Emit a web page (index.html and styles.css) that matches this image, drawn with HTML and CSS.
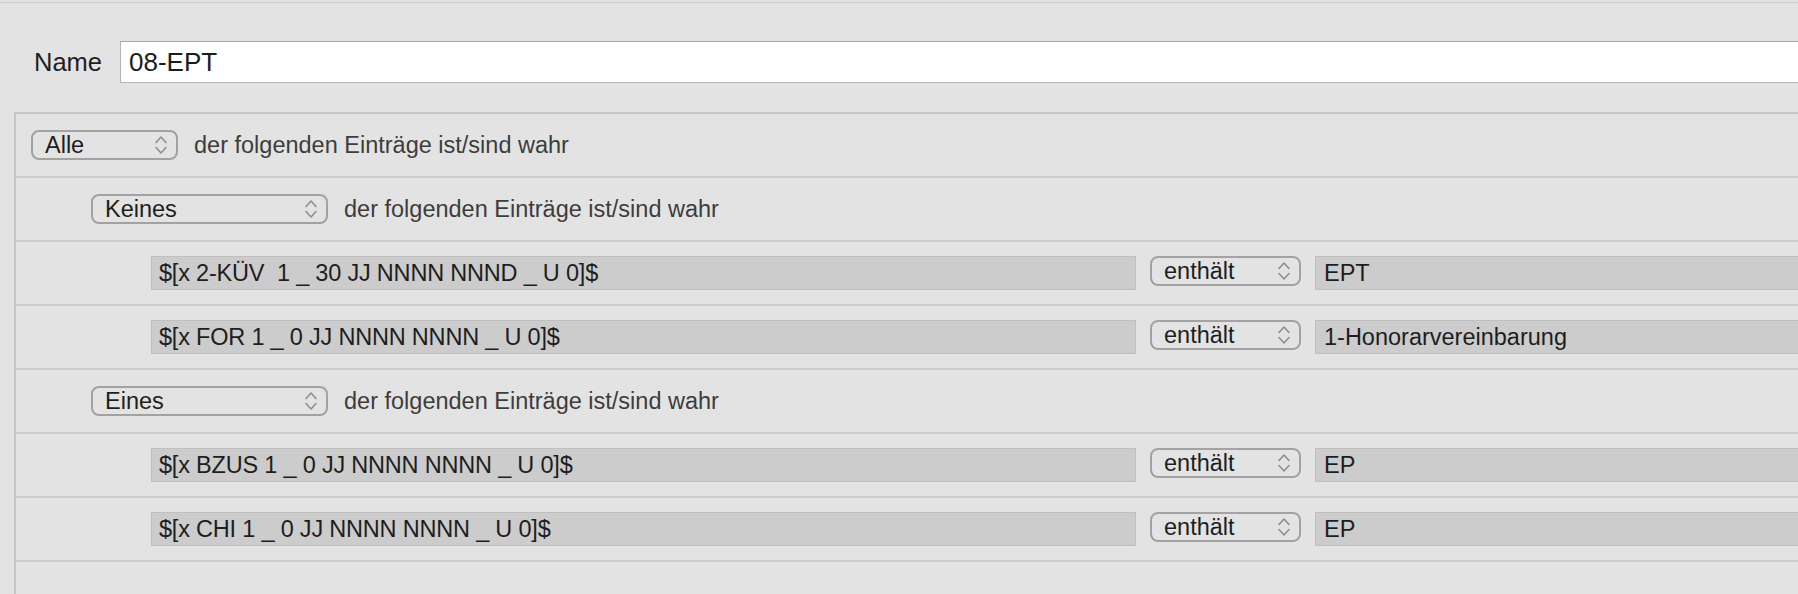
FILE: index.html
```html
<!DOCTYPE html>
<html lang="de">
<head>
<meta charset="utf-8">
<title>Regel</title>
<link rel="stylesheet" href="styles.css">
</head>
<body>
<div class="topline"></div>
<div class="name-row">
  <span class="name-label">Name</span>
  <div class="name-input">08-EPT</div>
</div>
<div class="rules">
  <div class="row lvl0">
    <div class="popup w0"><span>Alle</span><svg class="chev" viewBox="0 0 12 20" width="12" height="20"><path d="M1 7.5 L6 2 L11 7.5 M1 12.5 L6 18 L11 12.5"/></svg></div>
    <span class="desc">der folgenden Einträge ist/sind wahr</span>
  </div>
  <div class="row lvl1">
    <div class="popup w1"><span>Keines</span><svg class="chev" viewBox="0 0 12 20" width="12" height="20"><path d="M1 7.5 L6 2 L11 7.5 M1 12.5 L6 18 L11 12.5"/></svg></div>
    <span class="desc">der folgenden Einträge ist/sind wahr</span>
  </div>
  <div class="row lvl2">
    <div class="field">$[x 2-KÜV  1 _ 30 JJ NNNN NNND _ U 0]$</div>
    <div class="popup cmp"><span>enthält</span><svg class="chev" viewBox="0 0 12 20" width="12" height="20"><path d="M1 7.5 L6 2 L11 7.5 M1 12.5 L6 18 L11 12.5"/></svg></div>
    <div class="field value">EPT</div>
  </div>
  <div class="row lvl2">
    <div class="field">$[x FOR 1 _ 0 JJ NNNN NNNN _ U 0]$</div>
    <div class="popup cmp"><span>enthält</span><svg class="chev" viewBox="0 0 12 20" width="12" height="20"><path d="M1 7.5 L6 2 L11 7.5 M1 12.5 L6 18 L11 12.5"/></svg></div>
    <div class="field value">1-Honorarvereinbarung</div>
  </div>
  <div class="row lvl1">
    <div class="popup w1"><span>Eines</span><svg class="chev" viewBox="0 0 12 20" width="12" height="20"><path d="M1 7.5 L6 2 L11 7.5 M1 12.5 L6 18 L11 12.5"/></svg></div>
    <span class="desc">der folgenden Einträge ist/sind wahr</span>
  </div>
  <div class="row lvl2">
    <div class="field">$[x BZUS 1 _ 0 JJ NNNN NNNN _ U 0]$</div>
    <div class="popup cmp"><span>enthält</span><svg class="chev" viewBox="0 0 12 20" width="12" height="20"><path d="M1 7.5 L6 2 L11 7.5 M1 12.5 L6 18 L11 12.5"/></svg></div>
    <div class="field value">EP</div>
  </div>
  <div class="row lvl2">
    <div class="field">$[x CHI 1 _ 0 JJ NNNN NNNN _ U 0]$</div>
    <div class="popup cmp"><span>enthält</span><svg class="chev" viewBox="0 0 12 20" width="12" height="20"><path d="M1 7.5 L6 2 L11 7.5 M1 12.5 L6 18 L11 12.5"/></svg></div>
    <div class="field value">EP</div>
  </div>
</div>
</body>
</html>
```
FILE: styles.css
```css
html, body {
  margin: 0;
  height: 100%;
  overflow: hidden;
}
body {
  background: #e3e3e3;
  font-family: "Liberation Sans", Arial, sans-serif;
  color: #202020;
}
.topline {
  height: 2px;
  border-bottom: 1px solid #cfcfcf;
}
.name-row {
  display: flex;
  align-items: center;
  margin-top: 38px;
  height: 42px;
}
.name-label {
  margin-left: 34px;
  margin-right: 18px;
  font-size: 25.5px;
  color: #1f1f1f;
}
.name-input {
  flex: 1;
  box-sizing: border-box;
  height: 42px;
  background: #fff;
  border-top: 1px solid #a8a8a8;
  border-bottom: 1px solid #b4b4b4;
  border-left: 1px solid #b4b4b4;
  padding-left: 8px;
  font-size: 26px;
  display: flex;
  align-items: center;
  color: #1c1c1c;
}
.rules {
  box-sizing: border-box;
  margin-top: 29px;
  margin-left: 14px;
  border-top: 2px solid #c6c6c6;
  border-left: 2px solid #c6c6c6;
  height: calc(100vh - 112px);
  overflow: hidden;
}
.row {
  height: 62px;
  border-bottom: 2px solid #cdcdcd;
  display: flex;
  align-items: center;
  font-size: 23.5px;
}
.lvl0 { padding-left: 15px; }
.lvl1 { padding-left: 75px; }
.lvl2 { padding-left: 135px; }
.popup {
  box-sizing: border-box;
  height: 30px;
  border: 2px solid #a2a2a2;
  border-radius: 8px;
  display: flex;
  align-items: center;
  justify-content: space-between;
  padding-left: 12px;
  padding-right: 9px;
  flex-shrink: 0;
  color: #1e1e1e;
}
.popup.w0 { width: 147px; }
.popup.w1 { width: 237px; }
.popup.cmp {
  width: 151px;
  margin-left: 14px;
  margin-bottom: 4px;
}
.chev {
  fill: none;
  stroke: #8e8e8e;
  stroke-width: 1.6;
  stroke-linecap: round;
  stroke-linejoin: round;
}
.desc {
  margin-left: 16px;
  color: #3d3d3d;
}
.field {
  box-sizing: border-box;
  height: 34px;
  width: 985px;
  flex-shrink: 0;
  background: #cccccc;
  border: 1px solid #bfbfbf;
  padding-left: 7px;
  white-space: pre;
  display: flex;
  align-items: center;
  color: #1e1e1e;
  letter-spacing: -0.2px;
}
.field.value {
  flex: 1;
  width: auto;
  margin-left: 14px;
  border-right: none;
  padding-left: 8px;
  letter-spacing: 0;
}
```
